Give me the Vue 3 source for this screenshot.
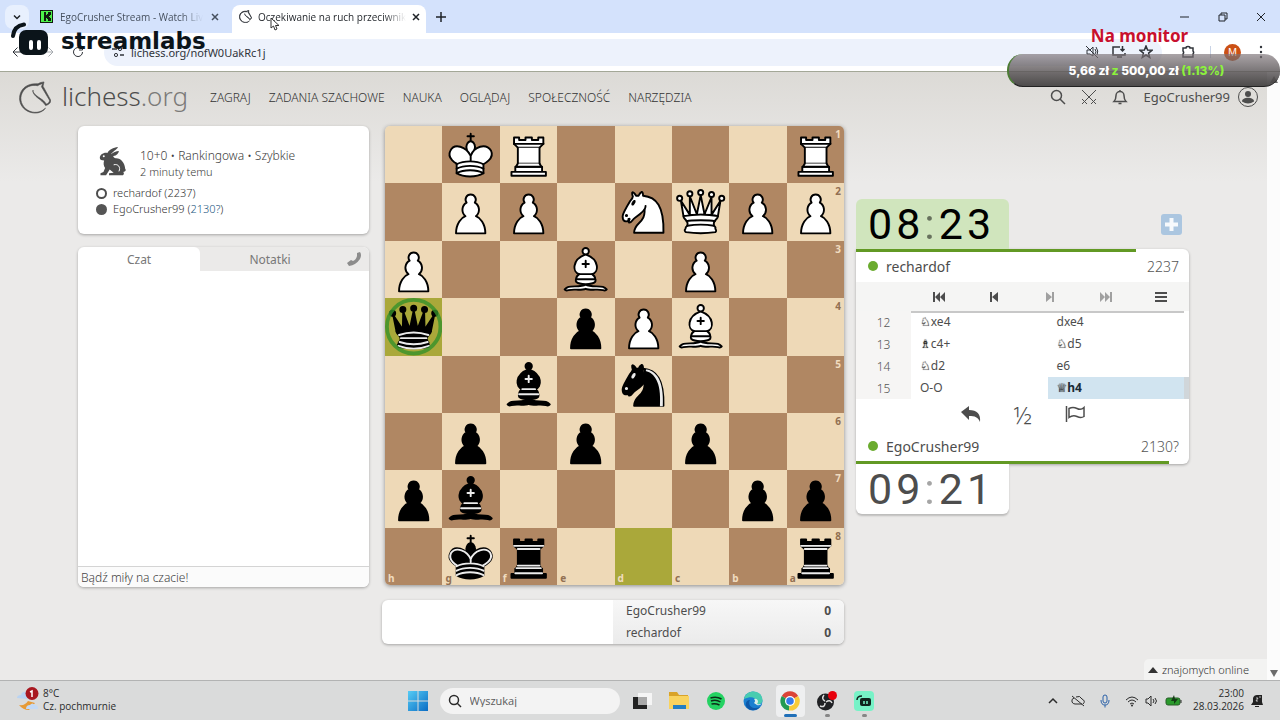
<script setup>
import { ref } from "vue";

const tabs = [
  { id: "kick", title: "EgoCrusher Stream - Watch Liv", active: false },
  { id: "lichess", title: "Oczekiwanie na ruch przeciwnik", active: true },
];

const nav = ["ZAGRAJ", "ZADANIA SZACHOWE", "NAUKA", "OGLĄDAJ", "SPOŁECZNOŚĆ", "NARZĘDZIA"];

const message = ref("");
const search = ref("");

// Board from black's side, files h to a
const files = "hgfedcba";
const rows = ["1KR4R", "1PP1NQPP", "P2B1P2", "q2pPB2", "2b1n3", "1p1p1p2", "pb4pp", "1kr4r"];
const lastMove = ["h4", "d8"];

const squares = rows.flatMap((row, y) => {
  const cells = row.replace(/\d/g, (n) => " ".repeat(Number(n)));
  return [...cells].map((piece, x) => ({
    key: files[x] + (y + 1),
    piece: piece.trim(),
    dark: (x + y) % 2 === 1,
    last: lastMove.includes(files[x] + (y + 1)),
    rank: x === 7 ? y + 1 : "",
    file: y === 7 ? files[x] : "",
  }));
});

const pawn =
  "M22.5 9a4 4 0 0 0-3.22 6.38 6.48 6.48 0 0 0-.87 10.65c-3 1.06-7.41 5.55-7.41 13.47h23c0-7.92-4.41-12.41-7.41-13.47a6.46 6.46 0 0 0-.87-10.65A4.01 4.01 0 0 0 22.5 9z";
const bishop = [
  "M9 36c3.39-.97 10.11.43 13.5-2 3.39 2.43 10.11 1.03 13.5 2 0 0 1.65.54 3 2-.68.97-1.65.99-3 .5-3.39-.97-10.11.46-13.5-1-3.39 1.46-10.11.03-13.5 1-1.35.49-2.32.47-3-.5 1.35-1.46 3-2 3-2z",
  "M15 32c2.5 2.5 12.5 2.5 15 0 .5-1.5 0-2 0-2 0-2.5-2.5-4-2.5-4 5.5-1.5 6-11.5-5-15.5-11 4-10.5 14-5 15.5 0 0-2.5 1.5-2.5 4 0 0-.5.5 0 2z",
  "M25 8a2.5 2.5 0 1 1-5 0 2.5 2.5 0 1 1 5 0z",
];
const bishopLines = "M17.5 26h10M15 30h15m-7.5-14.5v5M20 18h5";
const knight = [
  "M22 10c10.5 1 16.5 8 16 29H15c0-9 10-6.5 8-21",
  "M24 18c.38 2.91-5.55 7.37-8 9-3 2-2.82 4.34-5 4-1.04-.94 1.41-3.04 0-3-1 0 .19 1.23-1 2-1 0-4 1-4-4 0-2 6-12 6-12s1.89-1.9 2-3.5c-.73-1-.5-2-.5-3 1-1 3 2.5 3 2.5h2s.78-2 2.5-3c1 0 1 3 1 3",
];
const knightEye =
  "M9.5 25.5a.5.5 0 1 1-1 0 .5.5 0 1 1 1 0zm5.43-9.75a.5 1.5 30 1 1-.86-.5.5 1.5 30 1 1 .86.5z";
const queenBase =
  "M9 26c0 2 1.5 2 2.5 4 1 1.5 1 1 .5 3.5-1.5 1-1.5 2.5-1.5 2.5-1.5 1.5.5 2.5.5 2.5 6.5 1 16.5 1 23 0 0 0 1.5-1 0-2.5 0 0 .5-1.5-1-2.5-.5-2.5-.5-2 .5-3.5 1-2 2.5-2 2.5-4-8.5-1.5-18.5-1.5-27 0z";
const kingTop = "M22.5 25s4.5-7.5 3-10.5c0 0-1-2.5-3-2.5s-3 2.5-3 2.5c-1.5 3 3 10.5 3 10.5";
const kingBody =
  "M11.5 37c5.5 3.5 15.5 3.5 21 0v-7s9-4.5 6-10.5c-4-6.5-13.5-3.5-16 4V27v-3.5c-3.5-7.5-13-10.5-16-4-3 6 5 10 5 10V37z";
const kingBands = "M11.5 30c5.5-3 15.5-3 21 0m-21 3.5c5.5-3 15.5-3 21 0m-21 3.5c5.5-3 15.5-3 21 0";

// body: filled shapes, line: strokes, eye: thin accents
const pieces = {
  P: { body: [pawn] },
  p: { body: [pawn] },
  B: { body: bishop, line: bishopLines },
  b: { body: bishop, line: bishopLines },
  N: { body: knight, eye: knightEye },
  n: {
    body: knight,
    eye: knightEye,
    shine:
      "m24.55 10.4-.45 1.45.5.15c3.15 1 5.65 2.49 7.9 6.75S35.75 29.06 35.25 39l-.05.5h2.25l.05-.5c.5-10.06-.88-16.85-3.25-21.34-2.37-4.49-5.79-6.64-9.19-7.16l-.51-.1z",
  },
  R: {
    body: [
      "M9 39h27v-3H9v3zM12 36v-4h21v4H12zM11 14V9h4v2h5V9h5v2h5V9h4v5",
      "m34 14-3 3H14l-3-3",
      "M31 17v12.5H14V17",
      "m31 29.5 1.5 2.5h-20l1.5-2.5",
    ],
    line: "M11 14h23",
  },
  r: {
    body: [
      "M9 39h27v-3H9v3zM12.5 32l1.5-2.5h17l1.5 2.5h-20zM12 36v-4h21v4H12z",
      "M14 29.5v-13h17v13H14z",
      "M14 16.5L11 14h23l-3 2.5H14zM11 14V9h4v2h5V9h5v2h5V9h4v5H11z",
    ],
    line: "M12 35.5h21M13 31.5h19M14 29.5h17M14 16.5h17M11 14h23",
  },
  Q: {
    body: [
      "M8 12a2 2 0 1 1-4 0 2 2 0 1 1 4 0zM24.5 7.5a2 2 0 1 1-4 0 2 2 0 1 1 4 0zM41 12a2 2 0 1 1-4 0 2 2 0 1 1 4 0zM16 8.5a2 2 0 1 1-4 0 2 2 0 1 1 4 0zM33 9a2 2 0 1 1-4 0 2 2 0 1 1 4 0z",
      "M9 26c8.5-1.5 21-1.5 27 0l2-12-7 11V11l-5.5 13.5-3-15-3 15-5.5-14V25L7 14l2 12z",
      queenBase,
    ],
    line: "M11.5 30c3.5-1 18.5-1 22 0M12 33.5c6-1 15-1 21 0",
  },
  q: {
    body: [
      "M8 12a2 2 0 1 1-4 0 2 2 0 1 1 4 0zM24.5 8a2 2 0 1 1-4 0 2 2 0 1 1 4 0zM41 12a2 2 0 1 1-4 0 2 2 0 1 1 4 0zM16 9a2 2 0 1 1-4 0 2 2 0 1 1 4 0zM33 9a2 2 0 1 1-4 0 2 2 0 1 1 4 0z",
      "M9 26c8.5-1.5 21-1.5 27 0l2.5-12.5L31 25l-.3-14.1-5.2 13.6-3-14.5-3 14.5-5.2-13.6L14 25 6.5 13.5 9 26z",
      queenBase,
    ],
    line: "M11 29a35 35 1 0 1 23 0m-21.5 2.5h20m-21 3a35 35 1 0 0 22 0m-23 3a35 35 1 0 0 24 0",
  },
  K: { body: [kingTop, kingBody], line: "M22.5 11.63V6M20 8h5" + kingBands },
  k: {
    body: ["M22.5 11.63V6M20 8h5", kingTop, kingBody],
    line:
      "M32 29.5s8.5-4 6.03-9.65C34.15 14 25 18 22.5 24.5v2.1-2.1C20 18 10.85 14 6.97 19.85c-2.47 5.65 4.88 9.65 4.88 9.65" +
      kingBands,
  },
};

const isBlack = (piece) => piece === piece.toLowerCase();

const controls = [
  { label: "Początek", d: "M1 1h2v10H1zM8 1v10L3 6zM13 1v10L8 6z" },
  { label: "Poprzedni", d: "M3 1h2v10H3zM11 1v10L5 6z" },
  { label: "Następny", d: "M9 1h2v10H9zM3 1v10l6-5z", off: true },
  { label: "Koniec", d: "M11 1h2v10h-2zM6 1v10l5-5zM1 1v10l5-5z", off: true },
  { label: "Menu", d: "M1 1h12v2H1zM1 5h12v2H1zM1 9h12v2H1z" },
];

const moves = [
  { n: 12, white: ["♘", "xe4"], black: ["", "dxe4"] },
  { n: 13, white: ["♗", "c4+"], black: ["♘", "d5"] },
  { n: 14, white: ["♘", "d2"], black: ["", "e6"] },
  { n: 15, white: ["", "O-O"], black: ["♕", "h4"], active: true },
];

const score = [
  { name: "EgoCrusher99", points: 0 },
  { name: "rechardof", points: 0 },
];
</script>

<template>
  <div class="screen">
    <!-- Browser tabs -->
    <div class="tabs">
      <button class="tab-search" aria-label="Szukaj kart">
        <svg viewBox="0 0 10 10" width="10" height="10"><path d="M2 3.500l3 3 3-3" class="ln bold" /></svg>
      </button>
      <div v-for="tab in tabs" :key="tab.id" class="tab" :class="{ active: tab.active }">
        <svg v-if="tab.id === 'kick'" viewBox="0 0 13 13" width="13" height="13">
          <path d="M0 0h13v13H0z" fill="#101a10" />
          <path d="M1 1h11v11H1z" fill="#4df04a" />
          <path d="M4 2h2v3h1V4h1V2h3v3h-1v1H9v1h1v1h1v3H8V9H7V8H6v3H4z" fill="#101a10" />
        </svg>
        <svg v-else viewBox="-1 -1 52 52" width="13" height="13"><path class="horse thick" d="M38.956.5c-3.530.418-6.452.902-9.286 2.984C5.534 1.786-.692 18.533.680 29.364 3.493 50.214 31.918 55.785 41.329 41.700c-7.444 7.696-19.276 8.752-28.323 3.084C3.959 39.116-.506 27.392 4.683 17.567 9.873 7.742 18.996 4.535 29.030 6.405c2.430-1.418 5.225-3.220 7.655-3.187l-1.694 4.860 12.752 21.370c-.439 5.654-5.459 6.112-5.459 6.112-.574-1.470-1.634-2.942-4.842-6.036-3.207-3.094-17.465-10.177-15.788-16.207-2.001 6.967 10.311 14.152 14.040 17.663 3.730 3.510 5.426 6.040 5.795 6.756 0 0 9.392-2.504 7.838-8.927L37.400 7.171z" /></svg>
        <span class="tab-title">{{ tab.title }}</span>
        <button class="tab-close" aria-label="Zamknij kartę">
          <svg viewBox="0 0 8 8" width="8" height="8"><path d="M1 1l6 6M7 1l-6 6" class="ln bold" /></svg>
        </button>
      </div>
      <button class="tab-new" aria-label="Nowa karta">
        <svg viewBox="0 0 10 10" width="10" height="10"><path d="M5 0v10M0 5h10" class="ln bold" /></svg>
      </button>
      <div class="window-buttons">
        <button aria-label="Minimalizuj"><svg viewBox="0 0 10 10" width="10" height="10"><path d="M0 5h9" class="ln" /></svg></button>
        <button aria-label="Przywróć"><svg viewBox="0 0 10 10" width="10" height="10"><path d="M1 3h6v6H1zM3 3V1h6v6H7" class="ln" /></svg></button>
        <button aria-label="Zamknij"><svg viewBox="0 0 10 10" width="10" height="10"><path d="M1 1l8 8M9 1L1 9" class="ln" /></svg></button>
      </div>
    </div>

    <div class="toolbar">
      <button aria-label="Wstecz"><svg viewBox="0 0 12 12" width="12" height="12"><path d="M11 6H1l4.500-4.500M1 6l4.500 4.500" class="ln" /></svg></button>
      <button aria-label="Dalej" class="faded"><svg viewBox="0 0 12 12" width="12" height="12"><path d="M1 6h10L6.500 1.500M11 6l-4.500 4.500" class="ln" /></svg></button>
      <button aria-label="Odśwież"><svg viewBox="0 0 12 12" width="12" height="12"><path d="M10.500 6A4.500 4.500 0 1 1 9 2.700M10.500 0v4H7" class="ln" /></svg></button>
      <div class="address">
        <svg viewBox="0 0 12 12" width="12" height="12"><path d="M0 3h5M8 9h4" class="ln bold" /><circle cx="8" cy="3" r="1.600" class="ln" /><circle cx="4" cy="9" r="1.600" class="ln" /></svg>
        <input aria-label="Adres" value="lichess.org/nofW0UakRc1j" />
        <div class="address-icons">
          <svg viewBox="0 0 14 14" width="14" height="14"><path d="M1 1l12 12M2 5h3l3-3v9L5 9H2zM10 4q2 3 0 5M11 2q3 4 1 8" class="ln" /></svg>
          <svg viewBox="0 0 14 14" width="14" height="14"><path d="M8 2H1v8h12V8M5 12h5M10.500 1v5M8.500 4l2 2 2-2" class="ln bold" /></svg>
          <svg viewBox="0 0 14 14" width="14" height="14"><path d="M7 1l1.600 4 4.400.3-3.400 2.800 1.100 4.300L7 10l-3.700 2.400 1.100-4.300L1 5.300 5.400 5z" class="ln bold" /></svg>
        </div>
      </div>
      <div class="toolbar-icons">
        <svg class="puzzle" viewBox="0 0 14 14" width="14" height="14"><path d="M2 3h3a2 1.500 0 0 1 4 0h3v3a1.500 2 0 0 1 0 3v3H2V9a1.500 2 0 0 0 0-3z" class="ln bold" /></svg>
        <span class="sep"></span>
        <span class="profile">M</span>
        <svg viewBox="0 0 14 14" width="14" height="14"><circle cx="7" cy="2" r="1.200" /><circle cx="7" cy="7" r="1.200" /><circle cx="7" cy="12" r="1.200" /></svg>
      </div>
    </div>

    <!-- Lichess -->
    <div class="viewport">
      <div class="page">
        <header class="top">
          <a href="#" class="brand">
            <svg viewBox="-2 -1 52 52" width="33" height="33"><path class="horse" d="M38.956.5c-3.530.418-6.452.902-9.286 2.984C5.534 1.786-.692 18.533.680 29.364 3.493 50.214 31.918 55.785 41.329 41.700c-7.444 7.696-19.276 8.752-28.323 3.084C3.959 39.116-.506 27.392 4.683 17.567 9.873 7.742 18.996 4.535 29.030 6.405c2.430-1.418 5.225-3.220 7.655-3.187l-1.694 4.860 12.752 21.370c-.439 5.654-5.459 6.112-5.459 6.112-.574-1.470-1.634-2.942-4.842-6.036-3.207-3.094-17.465-10.177-15.788-16.207-2.001 6.967 10.311 14.152 14.040 17.663 3.730 3.510 5.426 6.040 5.795 6.756 0 0 9.392-2.504 7.838-8.927L37.400 7.171z" /></svg>
            <span>lichess<i>.org</i></span>
          </a>
          <nav>
            <a v-for="item in nav" :key="item" href="#">{{ item }}</a>
          </nav>
          <div class="site-buttons">
            <button aria-label="Szukaj"><svg viewBox="0 0 16 16" width="16" height="16"><circle cx="6.500" cy="6.500" r="5" class="ln bold" /><path d="M10 10l5 5" class="ln bold" /></svg></button>
            <button aria-label="Wyzwania"><svg viewBox="0 0 16 16" width="16" height="16"><path d="M1 1l11 11M15 1L4 12M1 10l5 5M15 10l-5 5M3 13l-2 2M13 13l2 2" class="ln" /></svg></button>
            <button aria-label="Powiadomienia"><svg viewBox="0 0 16 16" width="16" height="16"><path d="M2 12.500c2-2 2-3 2-6a4 4 0 0 1 8 0c0 3 0 4 2 6zM8 1v1.500M6.500 14.500h3" class="ln bold" /></svg></button>
            <a href="#" class="me">EgoCrusher99</a>
            <svg class="avatar" viewBox="0 0 22 22" width="22" height="22"><circle cx="11" cy="11" r="9.500" class="ln" /><circle cx="11" cy="8" r="3" /><path d="M5 15.500c0-5 12-5 12 0q-6 4-12 0z" /></svg>
          </div>
        </header>

        <main>
          <aside class="side">
            <section class="game-info card">
              <div class="setup">
                <svg viewBox="0 0 84 88" width="28" height="29"><path d="M57 0C43 1 30 9 25 18 12 16 2 24 2 33 2 39 8 40 15 41 12 50 14 58 18 64L13 76 4 80V86H21L32 68 44 78 30 80V86H72C76 83 76 78 73 76 80 75 83 70 79 66 78 48 66 33 50 34 44 32 42 28 43 27 53 26 59 20 60 12 52 12 42 17 36 22 40 14 55 8 57 0Z" /><circle cx="14" cy="28" r="3" fill="#fff" /><path d="M44 54C58 50 66 62 60 74" fill="none" stroke="#fff" stroke-width="3" /></svg>
                <div>
                  <h1>10+0 • Rankingowa • Szybkie</h1>
                  <p>2 minuty temu</p>
                </div>
              </div>
              <p class="player"><span class="dot white"></span>rechardof (2237)</p>
              <p class="player"><span class="dot"></span>EgoCrusher99 (<b>2130?</b>)</p>
            </section>

            <section class="chat card">
              <div class="chat-tabs">
                <button class="on">Czat</button>
                <button class="notes">Notatki</button>
                <svg viewBox="0 0 16 16" width="16" height="16"><path d="M11 2l3-1q2 3 0 7-4 6-11 7L1 12l4-3 2 1q3-1 4-5z" /></svg>
              </div>
              <div class="chat-log"></div>
              <input v-model="message" placeholder="Bądź miły na czacie!" aria-label="Wiadomość" />
            </section>
          </aside>

          <div class="center">
            <div class="board">
              <div v-for="sq in squares" :key="sq.key" class="sq" :class="{ dark: sq.dark, last: sq.last }">
                <svg v-if="sq.piece" class="piece" :class="{ black: isBlack(sq.piece) }" viewBox="0 0 45 45">
                  <path v-for="d in pieces[sq.piece].body" :key="d" :d="d" class="body" />
                  <path v-if="pieces[sq.piece].line" :d="pieces[sq.piece].line" class="line" />
                  <path v-if="pieces[sq.piece].eye" :d="pieces[sq.piece].eye" class="eye" />
                  <path v-if="pieces[sq.piece].shine" :d="pieces[sq.piece].shine" class="shine" />
                  <circle v-if="sq.key === 'h4'" cx="22.500" cy="22.500" r="21" class="mark" />
                </svg>
                <span v-if="sq.rank" class="rank">{{ sq.rank }}</span>
                <span v-if="sq.file" class="file">{{ sq.file }}</span>
              </div>
            </div>
            <div class="crosstable card">
              <div class="history"></div>
              <div class="totals">
                <p v-for="s in score" :key="s.name"><a href="#">{{ s.name }}</a><b>{{ s.points }}</b></p>
              </div>
            </div>
          </div>

          <div class="right">
            <div class="clock-row">
              <div class="clock running">
                <span>0</span><span>8</span><i>:</i><span>2</span><span>3</span>
              </div>
              <button class="more-time" aria-label="Dodaj czas">
                <svg viewBox="0 0 21 21" width="21" height="21"><rect width="21" height="21" rx="3" fill="#abc6e0" /><path d="M10.500 4v13M4 10.500h13" stroke="#f6f9fc" stroke-width="4" /></svg>
              </button>
            </div>
            <section class="table-box card">
              <div class="bar" :style="{ width: '84%' }"></div>
              <div class="user"><span class="online"></span><a href="#">rechardof</a><span class="rating">2237</span></div>
              <div class="controls">
                <button v-for="c in controls" :key="c.label" :aria-label="c.label" :disabled="c.off">
                  <svg viewBox="0 0 14 12" width="14" height="12"><path :d="c.d" /></svg>
                </button>
              </div>
              <table>
                <tbody>
                  <tr v-for="m in moves" :key="m.n">
                    <th scope="row">{{ m.n }}</th>
                    <td><i>{{ m.white[0] }}</i>{{ m.white[1] }}</td>
                    <td :class="{ current: m.active }"><i>{{ m.black[0] }}</i>{{ m.black[1] }}</td>
                  </tr>
                </tbody>
              </table>
              <div class="actions">
                <button aria-label="Cofnij"><svg viewBox="0 0 20 18" width="20" height="18"><path d="M0 7l8-6v4c8 0 12 4 11 12-2-5-5-6-11-6v4z" /></svg></button>
                <button class="half">½</button>
                <button aria-label="Poddaj się"><svg viewBox="0 0 20 18" width="20" height="18"><path d="M1.500 1v16M4 3.500q4-2 8 0t7-1v9q-3 2-7 0t-8 1z" class="ln bold" /></svg></button>
              </div>
              <div class="user own"><span class="online"></span><a href="#">EgoCrusher99</a><span class="rating">2130?</span></div>
              <div class="bar" :style="{ width: '94%' }"></div>
            </section>
            <div class="clock bottom">
              <span>0</span><span>9</span><i>:</i><span>2</span><span>1</span>
            </div>
          </div>
        </main>

        <button class="friends">
          <svg viewBox="0 0 10 6" width="10" height="6"><path d="M5 0l5 6H0z" /></svg>
          znajomych online
        </button>
      </div>
      <div class="scrollbar">
        <svg viewBox="0 0 10 7" width="10" height="7"><path d="M5 0l4 7H1z" /></svg>
        <svg viewBox="0 0 10 7" width="10" height="7"><path d="M1 0h8L5 7z" /></svg>
      </div>
    </div>

    <!-- Windows taskbar -->
    <footer class="taskbar">
      <div class="weather">
        <svg viewBox="0 0 24 28" width="24" height="28">
          <path d="M1 11q0-3 4-3 1-4 6-3v7z" fill="#b9d3f2" />
          <path d="M3 18q6 1 9-4l7 2-6 7q-6 0-10-5z" fill="#e79a35" />
          <path d="M10 22q0-4 4-4 2-3 5 0 3 0 3 4z" fill="#c3daf6" />
          <circle cx="16" cy="6.500" r="6.500" fill="#a81720" />
          <path d="M14 5l2-1v6" fill="none" stroke="#fff" stroke-width="1.500" />
        </svg>
        <p>8°C<br />Cz. pochmurnie</p>
      </div>
      <div class="apps">
        <svg class="start" viewBox="0 0 20 20" width="20" height="20">
          <defs><linearGradient id="win" x2="1" y2="1"><stop stop-color="#56ccf5" /><stop offset="1" stop-color="#0a6cc4" /></linearGradient></defs>
          <path d="M0 0h9.500v9.500H0zM10.500 0H20v9.500h-9.500zM0 10.500h9.500V20H0zM10.500 10.500H20V20h-9.500z" fill="url(#win)" />
        </svg>
        <label class="search">
          <svg viewBox="0 0 14 14" width="14" height="14"><circle cx="6" cy="6" r="4.500" class="ln bold" /><path d="M9 9l4 4" class="ln bold" /></svg>
          <input v-model="search" placeholder="Wyszukaj" aria-label="Wyszukaj" />
        </label>
        <div class="app"><svg viewBox="0 0 20 20" width="20" height="20"><path d="M6 2h14v12H6z" fill="#f5f5f5" /><path d="M1 6h5v8h9v4H1z" fill="#222" /><path d="M6 6h9v8H6z" fill="#a9a9a9" /></svg></div>
        <div class="app"><svg viewBox="0 0 20 20" width="20" height="20"><path d="M0 1h8l2 3h9v4H0z" fill="#d9a329" /><path d="M0 5h20v13H0z" fill="#f9d35f" /><path d="M4 14h13v4H4z" fill="#237fc4" /></svg></div>
        <div class="app"><svg viewBox="0 0 20 20" width="20" height="20"><circle cx="10" cy="10" r="9" fill="#24d262" /><path d="M4.500 7q6-2 11 1M5 10q5-2 9.500 1M5.500 13q4-1 8 1" fill="none" stroke="#0c2c18" stroke-width="1.500" /></svg></div>
        <div class="app"><svg viewBox="0 0 20 20" width="20" height="20">
          <circle cx="10" cy="10" r="9.500" fill="#1a7fd0" />
          <path d="M1 8C3-2 19-2 19.500 9c0 5-6 5-8 3 3-4-1-8-10.500-4z" fill="#48ccb0" />
          <path d="M7 9c-3 6 3 10 10 7-4 5-12 4-14-1-1-3 1-6 4-6z" fill="#0d58a8" />
          <path d="M11 12q2-2 0-4 3-1 4 2 0 2-1 3 3 1 5-1-2 3-5 2z" fill="#dceee8" />
        </svg></div>
        <div class="app focused open"><svg viewBox="0 0 20 20" width="20" height="20">
          <path d="M10 10L1.800 5A9.500 9.500 0 0 1 18.200 5z" fill="#dc4437" />
          <path d="M10 10L1.800 5A9.500 9.500 0 0 0 9 19.500z" fill="#249a52" />
          <path d="M10 10l8.200-5A9.500 9.500 0 0 1 9 19.500z" fill="#f8cb38" />
          <circle cx="10" cy="10" r="5" fill="#fff" /><circle cx="10" cy="10" r="3.800" fill="#367bea" />
        </svg></div>
        <div class="app open"><svg viewBox="0 0 20 20" width="20" height="20">
          <circle cx="8.500" cy="11" r="8.500" fill="#202124" />
          <path d="M8 10q-4-2-1-6M9 11q4-3 6 1M8 12q0 5-5 3" fill="none" stroke="#ddd" stroke-width="1.500" />
          <circle cx="15.500" cy="4.500" r="4.500" fill="#e8000c" />
        </svg></div>
        <div class="app open"><svg viewBox="0 0 20 20" width="20" height="20">
          <rect width="20" height="20" rx="4" fill="#77f2c7" />
          <rect x="6" y="7" width="11" height="8" rx="2" fill="#10241e" /><path d="M3 9q0-4 5-4" fill="none" stroke="#10241e" stroke-width="1.500" />
          <path d="M10 10v3M13 10v3" stroke="#77f2c7" stroke-width="1.500" />
        </svg></div>
      </div>
      <div class="tray">
        <svg viewBox="0 0 10 10" width="10" height="10"><path d="M1 7l4-4 4 4" class="ln bold" /></svg>
        <svg viewBox="0 0 14 14" width="14" height="14"><path d="M1 2l12 10M3 4q-3 1-2 4 1 2 3 2h7M5 3q4-2 6 2 4 2 1 5" class="ln" /></svg>
        <svg class="mic" viewBox="0 0 14 14" width="14" height="14"><rect x="5" y="1" width="4" height="8" rx="2" class="ln" /><path d="M3 6q0 5 4 5t4-5M7 11v2.500" class="ln" /></svg>
        <span class="net">
          <svg viewBox="0 0 14 12" width="14" height="12"><path d="M1 5q6-6 12 0M3 7q4-4 8 0M5 9q2-2 4 0" class="ln" /><circle cx="7" cy="10.500" r="1" /></svg>
          <svg viewBox="0 0 14 12" width="14" height="12"><path d="M1 4h2l3-3v10L3 8H1zM8 4q2 2 0 4M10 3q3 3 0 6" class="ln" /></svg>
          <svg viewBox="0 0 18 12" width="18" height="12"><rect x="1" y="3" width="14" height="7" rx="2" fill="#2a9a2c" stroke="#265e27" /><path d="M16 5v3" class="ln" /><path d="M9 0L6 6h3v3l4-5h-3z" fill="#143c16" /></svg>
        </span>
        <p>23:00<br />28.03.2026</p>
        <svg class="bell" viewBox="0 0 14 14" width="14" height="14"><path d="M1 11l2-3V4q1-3 4-3h5v7l1 3zM5 12h4v1H5z" fill="#222" /><path d="M6 4h2L6 7h2M9 3h2" fill="none" stroke="#ddd" stroke-width=".8" /></svg>
      </div>
    </footer>

    <!-- Stream overlay -->
    <div class="streamlabs">
      <svg viewBox="0 0 38 34" width="38" height="34"><path d="M2 14Q3 4 13 2.500" fill="none" stroke="#0b141a" stroke-width="4" stroke-linecap="round" /><rect x="8" y="8" width="29" height="25" rx="7" fill="#0b141a" /><path d="M20 20v6M28 20v6" stroke="#fff" stroke-width="4" stroke-linecap="round" /></svg>
      <span>streamlabs</span>
    </div>
    <div class="goal">
      <p class="goal-title">Na monitor</p>
      <p class="goal-bar">5,66 zł <em>z</em> 500,00 zł <em>(1.13%)</em></p>
    </div>
    <svg class="cursor" viewBox="0 0 10 14" width="10" height="14"><path d="M1 1v10l2.500-2L5 13l2-1-1.500-3.500H9z" fill="#fff" stroke="#333" /></svg>
  </div>
</template>

<style>
body {
  margin: 0;
}
</style>

<style scoped>
* {
  box-sizing: border-box;
}

.screen {
  position: relative;
  display: flex;
  flex-direction: column;
  min-height: 100vh;
  overflow: hidden;
  background: #ebeae9;
  color: #4d4d4d;
  font-family: "Noto Sans", "Open Sans", sans-serif;
  font-size: 12px;
}

svg {
  display: block;
  flex: none;
  fill: currentColor;
}

p,
h1 {
  margin: 0;
}

button {
  display: flex;
  align-items: center;
  justify-content: center;
  padding: 0;
  border: 0;
  background: none;
  color: inherit;
  font: inherit;
}

input {
  min-width: 0;
  padding: 0;
  border: 0;
  outline: 0;
  background: none;
  color: inherit;
  font: inherit;
}

a {
  color: inherit;
  text-decoration: none;
}

.ln {
  fill: none;
  stroke: currentColor;
  stroke-width: 1;
}

.ln.bold {
  stroke-width: 1.5;
}

.horse {
  stroke: currentColor;
  stroke-width: 1;
}

.horse.thick {
  stroke-width: 2;
}

.card {
  border-radius: 6px;
  background: #fff;
  box-shadow: 0 1px 3px rgba(0, 0, 0, 0.3);
}

/* Browser */
.tabs {
  display: flex;
  align-items: center;
  height: 33px;
  padding-left: 5px;
  background: #d4e2fc;
  color: #1f2328;
}

.tab-search {
  width: 24px;
  height: 24px;
  border-radius: 8px;
  background: #e8f0fe;
}

.tab {
  display: flex;
  align-items: center;
  gap: 7px;
  width: 202px;
  height: 28px;
  padding: 0 11px;
  color: #46505e;
}

.tab.active {
  align-self: flex-end;
  width: 194px;
  margin-left: 1px;
  padding: 0 11px 5px 7px;
  gap: 6px;
  border-radius: 8px 8px 0 0;
  background: #fff;
  color: #1f2328;
}

.tab-title {
  flex: 1;
  white-space: nowrap;
  font-family: "Open Sans", sans-serif;
  font-size: 10px;
  mask-image: linear-gradient(90deg, #000 85%, transparent);
}

.tab-close {
  width: 10px;
  height: 14px;
}

.tab-new {
  width: 30px;
  height: 28px;
}

.window-buttons {
  display: flex;
  margin-left: auto;
}

.window-buttons button {
  width: 38px;
  height: 33px;
}

.toolbar {
  display: flex;
  align-items: center;
  gap: 6px;
  height: 39px;
  padding: 0 12px 0 6px;
  border-bottom: 1px solid #a3a797;
  background: #fff;
  color: #30343a;
}

.toolbar > button {
  width: 24px;
  height: 24px;
}

.toolbar > .faded {
  color: #a5a9ae;
}

.address {
  display: flex;
  flex: 1;
  align-items: center;
  gap: 7px;
  height: 27px;
  margin-left: 8px;
  padding: 0 9px 0 8px;
  border-radius: 14px;
  background: #edf2fc;
}

.address input {
  flex: 1;
  font-size: 11px;
}

.address-icons,
.toolbar-icons {
  display: flex;
  align-items: center;
  gap: 13px;
}

.puzzle {
  margin: 0 2px 0 13px;
}

.sep {
  width: 1px;
  height: 12px;
  background: #c8d3e6;
}

.profile {
  width: 17px;
  border-radius: 50%;
  background: #cb5015;
  color: #fff;
  font-size: 10px;
  line-height: 17px;
  text-align: center;
}

/* Page */
.viewport {
  display: flex;
  flex: 1;
}

.page {
  position: relative;
  flex: 1;
  min-width: 0;
  background: linear-gradient(#dcdad6, #ebeae9 110px);
}

.scrollbar {
  display: flex;
  flex-direction: column;
  justify-content: space-between;
  align-items: center;
  width: 13px;
  padding: 4px 0 3px;
  background: #fcfcfc;
  color: #6c6c6c;
}

.top {
  display: flex;
  align-items: center;
  height: 50px;
  padding: 0 8px 0 18px;
}

.brand {
  display: flex;
  align-items: center;
  gap: 11px;
  margin-right: 22px;
  font-size: 26px;
  line-height: 32px;
  font-weight: 300;
}

.brand span {
  padding-bottom: 3px;
}

.brand i {
  color: #7b7a78;
  font-style: normal;
}

nav {
  display: flex;
  gap: 18px;
  color: #333;
  font-size: 12px;
  font-weight: 300;
  white-space: nowrap;
}

.site-buttons {
  display: flex;
  align-items: center;
  gap: 15px;
  margin-left: auto;
}

.me {
  font-size: 13px;
}

.avatar {
  margin-left: -8px;
}

main {
  display: grid;
  grid-template-columns: minmax(0, 295fr) minmax(0, 459fr) minmax(0, 333fr);
  gap: 12px;
  padding: 4px 78px 36px;
}

.side {
  display: flex;
  flex-direction: column;
  gap: 13px;
  margin: 0 4px 57px 0;
}

.game-info {
  height: 108px;
  padding: 21px 18px;
  color: #333;
  font-weight: 300;
}

.setup {
  display: flex;
  gap: 13px;
  margin-bottom: 5px;
  padding-left: 3px;
  color: #3d3d3d;
}

.setup svg {
  color: #4d4d4d;
}

.setup h1 {
  font-size: 12px;
  line-height: 17px;
  font-weight: 300;
}

.setup p {
  font-size: 11px;
  line-height: 16px;
}

.player {
  display: flex;
  align-items: center;
  font-size: 11px;
  line-height: 16px;
}

.player b {
  color: #1b5580;
  font-weight: 300;
}

.dot {
  width: 11px;
  height: 11px;
  margin-right: 6px;
  border-radius: 50%;
  background: #555;
}

.dot.white {
  border: 2px solid #4d4d4d;
  background: #fff;
}

.chat {
  display: flex;
  flex: 1;
  flex-direction: column;
  overflow: hidden;
}

.chat-tabs {
  display: flex;
  align-items: center;
  height: 24px;
  padding-right: 7px;
  background: #ebeae9;
  color: #787878;
}

.chat-tabs svg {
  color: #8c8c8c;
}

.chat-tabs button {
  flex: 1;
  align-self: stretch;
  font-size: 12px;
}

.chat-tabs button.on {
  flex: 0 0 43%;
  border-radius: 6px 6px 0 0;
  background: #fff;
}

.chat-tabs .notes {
  padding-right: 6px;
}

.chat-log {
  flex: 1;
}

.chat input {
  height: 21px;
  padding: 0 3px;
  border-top: 1px solid #d4d4d4;
  background: #fbfbfb;
  font-size: 12px;
  font-weight: 300;
}

.chat input::placeholder {
  color: #444;
}

/* Board */
.board {
  display: grid;
  grid-template-columns: repeat(8, 1fr);
  aspect-ratio: 1;
  overflow: hidden;
  border-radius: 5px;
  box-shadow: 0 1px 4px rgba(0, 0, 0, 0.4);
}

.sq {
  position: relative;
  background: #eed9b7;
  color: #927052;
  font-size: 10px;
  font-weight: 700;
  line-height: 14px;
}

.sq.dark {
  background: #b08763;
  color: #f0dcc0;
}

.sq.last {
  background: #aaa83a;
}

.piece {
  width: 100%;
  height: 100%;
}

.body,
.line,
.eye {
  fill: #fff;
  stroke: #000;
  stroke-width: 1.5;
  stroke-linecap: round;
  stroke-linejoin: round;
}

.line {
  fill: none;
}

.eye {
  fill: #000;
}

.black .body {
  fill: #000;
}

.black .line {
  stroke: #ececec;
}

.black .eye {
  fill: #ececec;
  stroke: #ececec;
}

.shine {
  fill: #ececec;
}

.mark {
  fill: none;
  stroke: #36912b;
  stroke-width: 3;
  opacity: 0.8;
}

.rank {
  position: absolute;
  top: 1px;
  right: 3px;
}

.file {
  position: absolute;
  bottom: 0;
  left: 3px;
}

.crosstable {
  display: flex;
  margin: 15px 0 0 -3px;
  overflow: hidden;
}

.history,
.totals {
  flex: 1;
}

.totals {
  background: linear-gradient(#f7f7f7, #ebebeb);
}

.totals p {
  display: flex;
  justify-content: space-between;
  padding: 0 13px;
  line-height: 22px;
}

/* Clocks and moves */
.right {
  padding-top: 73px;
}

.clock-row {
  display: flex;
  justify-content: space-between;
  align-items: center;
  padding-right: 7px;
}

.clock {
  display: flex;
  gap: 4px;
  width: 153px;
  height: 50px;
  padding-left: 12px;
  border-radius: 6px 6px 0 0;
  font-family: Roboto, sans-serif;
  font-size: 43px;
  line-height: 50px;
}

.clock i {
  font-style: normal;
  opacity: 0.5;
}

.clock.running {
  background: #d0e5bd;
  color: #000;
}

.clock.bottom {
  border-radius: 0 0 6px 6px;
  background: #fff;
  box-shadow: 0 2px 2px rgba(0, 0, 0, 0.2);
}

.table-box {
  overflow: hidden;
  border-radius: 0 6px 6px 0;
}

.bar {
  height: 3px;
  background: #629924;
}

.user {
  display: flex;
  align-items: center;
  height: 30px;
  padding: 0 10px 2px 12px;
  font-size: 14px;
}

.user.own {
  padding-bottom: 0;
}

.online {
  width: 10px;
  height: 10px;
  margin-right: 8px;
  border-radius: 50%;
  background: #6aab2e;
}

.rating {
  margin-left: auto;
  color: #555;
  font-weight: 300;
}

.controls {
  display: flex;
  height: 29px;
  padding-left: 55px;
  background: #f5f5f4;
}

.controls button {
  flex: 1;
}

.controls button:disabled {
  color: #a0a0a0;
}

table {
  width: calc(100% - 5px);
  border-collapse: collapse;
  table-layout: fixed;
}

th {
  width: 55px;
  padding: 0;
  background: #f6f5f4;
  color: #555;
  font-weight: 300;
}

td {
  height: 22px;
  padding: 0 9px;
  line-height: 20px;
}

tr:first-child td {
  box-shadow: inset 0 2px 0 #c8c8c8;
}

td i {
  color: #222;
  font-family: "DejaVu Sans", sans-serif;
  font-style: normal;
  text-shadow: 0 0 1px #222;
}

td.current {
  background: #d1e4f0;
  box-shadow: 5px 0 0 #d0d6da;
  color: #1b2b36;
  font-weight: 700;
}

.actions {
  display: flex;
  justify-content: center;
  gap: 32px;
  height: 32px;
  padding-bottom: 2px;
}

.actions .half {
  width: 20px;
  font-size: 24px;
  font-weight: 300;
}

.friends {
  position: absolute;
  right: 0;
  bottom: 0;
  gap: 4px;
  height: 21px;
  padding: 0 18px 0 4px;
  border-radius: 5px 0 0 0;
  background: #f3f3f2;
  color: #333;
  font-size: 11px;
  font-weight: 300;
}

/* Taskbar */
.taskbar {
  display: grid;
  grid-template-columns: 1fr auto 1fr;
  align-items: center;
  height: 40px;
  padding: 0 16px;
  border-top: 1px solid #b2b3b3;
  background: #dadbdb;
  color: #2b2b2b;
  font-family: "Open Sans", sans-serif;
  font-size: 10px;
  line-height: 13px;
}

.weather {
  display: flex;
  align-items: center;
  gap: 3px;
}

.weather p {
  padding-bottom: 2px;
}

.apps {
  display: flex;
  align-items: center;
  gap: 8px;
  padding-left: 6px;
}

.start {
  margin-right: 4px;
}

.search {
  display: flex;
  align-items: center;
  gap: 8px;
  width: 180px;
  height: 26px;
  padding: 0 8px;
  border-radius: 13px;
  background: #f3f3f3;
}

.search input {
  font-size: 11px;
}

.search input::placeholder {
  color: #5c5c5c;
}

.app {
  position: relative;
  display: flex;
  align-items: center;
  justify-content: center;
  width: 29px;
  height: 32px;
}

.app.focused {
  border-radius: 4px;
  background: #eeeff0;
}

.app.open::after {
  position: absolute;
  bottom: 0;
  width: 5px;
  height: 3px;
  border-radius: 2px;
  background: #868686;
  content: "";
}

.app.focused::after {
  width: 13px;
  background: #2070b8;
}

.tray {
  display: flex;
  align-items: center;
  justify-content: flex-end;
  gap: 13px;
  text-align: right;
}

.tray p {
  padding-bottom: 2px;
}

.bell {
  margin-left: -7px;
}

.mic {
  color: #2960a8;
}

.net {
  display: flex;
  gap: 6px;
  margin-right: -3px;
}

/* Overlay */
.streamlabs {
  position: absolute;
  top: 22px;
  left: 11px;
  display: flex;
  gap: 12px;
  color: #0b141a;
  font-family: "DejaVu Sans", sans-serif;
  font-size: 23px;
  font-weight: 700;
  line-height: 38px;
}

.goal {
  position: absolute;
  top: 24px;
  right: 0;
  width: 273px;
  font-weight: 700;
  text-align: center;
}

.goal-title {
  padding-right: 8px;
  color: #c8102e;
  font-size: 17px;
  line-height: 24px;
}

.goal-bar {
  height: 33px;
  margin-top: 6px;
  padding-left: 4px;
  border-radius: 16px;
  background: linear-gradient(rgba(125, 115, 120, 0.65), rgba(70, 68, 68, 0.95));
  border-bottom: 1px solid #222;
  border-left: 2px solid #4c7c35;
  color: #fff;
  font-family: Inter, sans-serif;
  font-size: 12px;
  font-weight: 800;
  line-height: 33px;
}

.goal-bar em {
  color: #8cf23c;
  font-style: normal;
}

.cursor {
  position: absolute;
  top: 17px;
  left: 270px;
}
</style>
